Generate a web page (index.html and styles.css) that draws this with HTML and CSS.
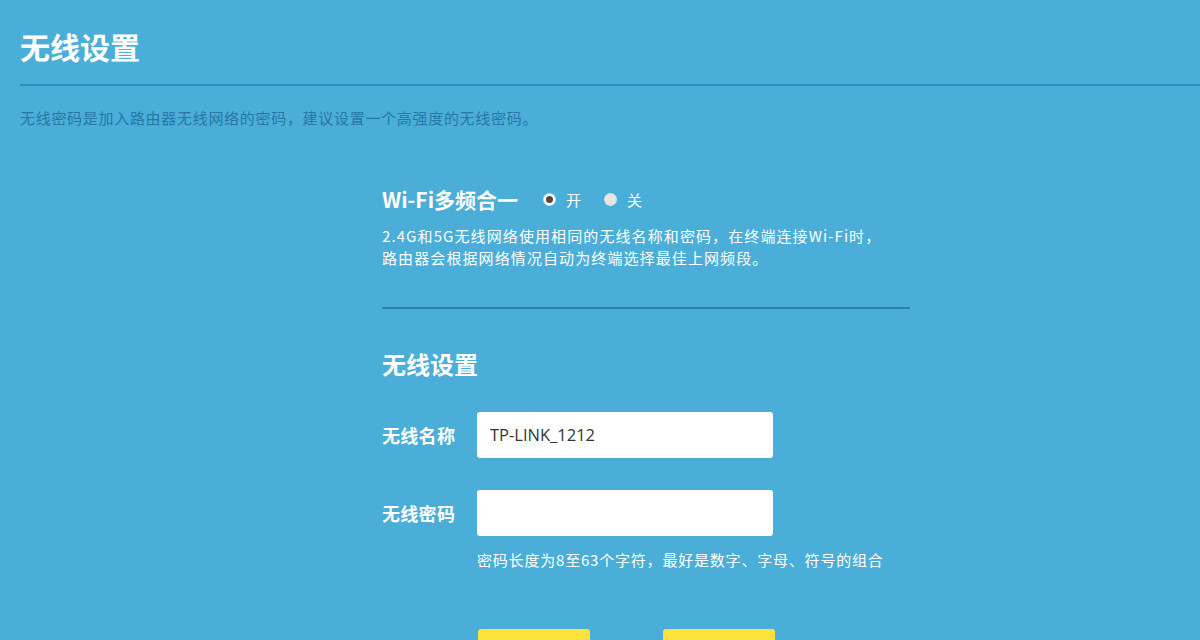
FILE: index.html
```html
<!DOCTYPE html>
<html lang="zh-CN">
<head>
<meta charset="utf-8">
<title>无线设置</title>
<link rel="stylesheet" href="styles.css">
</head>
<body>
<div class="page">
  <header class="head">
    <h1 class="title">无线设置</h1>
  </header>
  <p class="intro">无线密码是加入路由器无线网络的密码，建议设置一个高强度的无线密码。</p>
  <main class="panel">
    <section class="multi">
      <div class="multi-row">
        <span class="multi-title">Wi-Fi多频合一</span>
        <label class="radio"><span class="dot on"></span>开</label>
        <label class="radio"><span class="dot"></span>关</label>
      </div>
      <p class="multi-desc">2.4G和5G无线网络使用相同的无线名称和密码，在终端连接Wi-Fi时，<br>路由器会根据网络情况自动为终端选择最佳上网频段。</p>
    </section>
    <section class="wifi">
      <h2 class="sub">无线设置</h2>
      <div class="field">
        <span class="label">无线名称</span>
        <div class="input">TP-LINK_1212</div>
      </div>
      <div class="field pw">
        <span class="label">无线密码</span>
        <div class="input"></div>
      </div>
      <p class="hint">密码长度为8至63个字符，最好是数字、字母、符号的组合</p>
      <div class="buttons">
        <span class="btn"></span>
        <span class="btn"></span>
      </div>
    </section>
  </main>
</div>
</body>
</html>
```
FILE: styles.css
```css
html, body {
  margin: 0;
  padding: 0;
  height: 100%;
  overflow: hidden;
}
body {
  background: #4aaed9;
  font-family: "Noto Sans CJK SC", "Noto Sans", sans-serif;
  color: #ffffff;
}
.page {
  width: 1200px;
  height: 640px;
  padding-left: 20px;
  box-sizing: border-box;
}
.head {
  padding-top: 26px;
  height: 58px;
  border-bottom: 2px solid #2e90c0;
}
.title {
  margin: 0;
  font-size: 30px;
  line-height: 40px;
  font-weight: 700;
  color: #ffffff;
}
.intro {
  margin: 22px 0 0 0;
  font-size: 15px;
  letter-spacing: 0.7px;
  line-height: 20px;
  color: #2877a6;
}
.panel {
  margin-left: 362px;
  width: 528px;
  padding-top: 56px;
}
.multi {
  border-bottom: 2px solid #2b80b2;
  padding-bottom: 38px;
}
.multi-row {
  display: flex;
  align-items: center;
  height: 30px;
}
.multi-title {
  font-size: 21px;
  font-weight: 700;
  margin-right: 26px;
}
.radio {
  display: flex;
  align-items: center;
  font-size: 15px;
  margin-right: 24px;
}
.dot {
  width: 11px;
  height: 11px;
  border-radius: 50%;
  background: #f1e1de;
  margin-right: 11px;
  box-shadow: 0 0 0 1px rgba(255,255,255,0.7);
}
.dot.on {
  background: #ffffff;
  position: relative;
}
.dot.on::after {
  content: "";
  position: absolute;
  left: 2px;
  top: 2px;
  width: 7px;
  height: 7px;
  border-radius: 50%;
  background: #5a4444;
}
.multi-desc {
  margin: 11px 0 0 0;
  font-size: 15px;
  letter-spacing: 1.1px;
  line-height: 22px;
}
.sub {
  margin: 38px 0 0 0;
  font-size: 24px;
  line-height: 34px;
  font-weight: 700;
}
.field {
  display: flex;
  align-items: center;
  margin-top: 31px;
}
.field.pw {
  margin-top: 32px;
}
.label {
  width: 95px;
  font-size: 18px;
  letter-spacing: 0.3px;
  font-weight: 700;
}
.input {
  width: 296px;
  height: 46px;
  background: #ffffff;
  border-radius: 3px;
  box-sizing: border-box;
  padding-left: 13px;
  font-family: "Open Sans", "Noto Sans", sans-serif;
  font-size: 16.5px;
  line-height: 46px;
  color: #333333;
}
.hint {
  margin: 14px 0 0 95px;
  font-size: 15px;
  letter-spacing: 0.8px;
  line-height: 20px;
}
.buttons {
  display: flex;
  gap: 73px;
  margin: 59px 0 0 96px;
}
.btn {
  display: block;
  width: 112px;
  height: 40px;
  background: #fde23e;
  border-radius: 3px;
}
```
